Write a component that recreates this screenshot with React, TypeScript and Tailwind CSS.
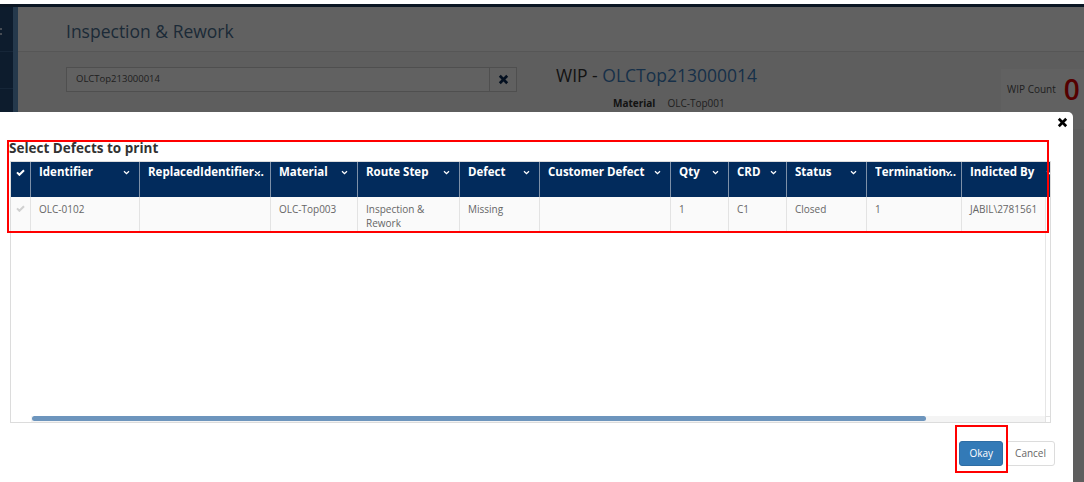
import React from 'react';

const columns = [
  { label: 'Identifier', width: 'w-[109px]' },
  { label: 'ReplacedIdentifierMaterial', width: 'w-[131px]' },
  { label: 'Material', width: 'w-[87px]' },
  { label: 'Route Step', width: 'w-[102px]' },
  { label: 'Defect', width: 'w-[80px]' },
  { label: 'Customer Defect', width: 'w-[131px]' },
  { label: 'Qty', width: 'w-[58px]' },
  { label: 'CRD', width: 'w-[58px]' },
  { label: 'Status', width: 'w-[80px]' },
  { label: 'TerminationReason', width: 'w-[95px]' },
  { label: 'Indicted By', width: 'w-[101px]' },
];

const row = ['OLC-0102', '', 'OLC-Top003', 'Inspection & Rework', 'Missing', '', '1', 'C1', 'Closed', '1', 'JABIL\\2781561'];

function Check({ className }: { className: string }) {
  return (
    <svg width="9" height="7" viewBox="0 0 9 7" className={className}>
      <path d="M1 3.4L3.4 5.8L8 1.2" fill="none" stroke="currentColor" strokeWidth="2" />
    </svg>
  );
}

function Chevron() {
  return (
    <svg width="7" height="5" viewBox="0 0 7 5" className="text-white">
      <path d="M1 1.2l2.5 2.5L6 1.2" fill="none" stroke="currentColor" strokeWidth="1.3" />
    </svg>
  );
}

function Times({ className }: { className: string }) {
  return (
    <svg width="11" height="11" viewBox="0 0 11 11" className={className}>
      <path d="M1.8 1.8l7.4 7.4M9.2 1.8l-7.4 7.4" stroke="currentColor" strokeWidth="2.7" />
    </svg>
  );
}

export default function App() {
  return (
    <div className="relative w-[1084px] h-[482px] overflow-hidden bg-white font-['Open_Sans',sans-serif]">
      {/* page behind the dialog */}
      <div className="h-[4px] bg-white" />
      <div className="h-[3px] bg-[#1d3a5c]" />
      <div className="flex h-[475px]">
        <aside className="w-[13px] bg-[#224a76] flex flex-col">
          <div className="h-[45px] border-b border-[#3a6594] flex flex-col gap-[3px] pt-[21px]">
            <span className="w-[2px] h-[2px] bg-[#b9c9dc]" />
            <span className="w-[2px] h-[2px] bg-[#b9c9dc]" />
          </div>
          <div className="h-[37px] border-b border-[#3a6594]" />
        </aside>
        <div className="w-[5px] bg-[#6396c8]" />
        <main className="flex-1 flex flex-col bg-[#f7f7f7]">
          <header className="h-[45px] bg-white border-b border-[#e3e3e3] flex items-center pl-[48px] pt-[4px]">
            <h1 className="text-[17.5px] text-[#4b6f91]">Inspection &amp; Rework</h1>
          </header>
          <div className="flex items-start pt-[16px] pl-[48px]">
            <div className="flex h-[25px] w-[451px] -mt-[1px]">
              <div className="flex-1 border border-[#cfcfcf] bg-white text-[9.5px] text-[#555] pl-[9px] flex items-center">
                OLCTop213000014
              </div>
              <button className="w-[27px] border border-l-0 border-[#cfcfcf] bg-[#fbfbfb] flex items-center justify-center text-[#0b2b55]">
                <Times className="" />
              </button>
            </div>
            <div className="ml-[39px] -mt-[5px]">
              <div className="text-[17.5px] leading-[24px] text-[#333]">
                WIP - <span className="text-[#3d7fbf]">OLCTop213000014</span>
              </div>
              <div className="flex text-[10px] leading-[14px] text-[#555] mt-[9px] pl-[57px]">
                <span className="font-bold text-[#333]">Material</span>
                <span className="ml-[12px]">OLC-Top001</span>
              </div>
            </div>
            <div className="ml-auto mt-[1px] w-[83px] h-[60px] bg-white flex items-start pt-[4px] pl-[6px]">
              <div className="flex items-center gap-[8px]">
                <span className="text-[10px] text-[#555]">WIP Count</span>
                <span className="text-[28px] leading-[32px] font-semibold text-[#e00000]">0</span>
              </div>
            </div>
          </div>
        </main>
      </div>

      {/* backdrop */}
      <div className="absolute inset-x-0 top-[4px] bottom-0 bg-black/[0.62]" />

      {/* dialog */}
      <div className="absolute left-[-6px] top-[112px] w-[1079px] bottom-[-10px] bg-white rounded-[5px] flex flex-col pt-[27px] pl-[16px] pr-[18px]">
        <button className="absolute top-[5px] right-[5px] text-black">
          <Times className="" />
        </button>
        <h2 className="-ml-[1px] text-[13.5px] leading-[18px] font-bold text-[#333]">Select Defects to print</h2>

        <div className="mt-[4px] w-[1041px] h-[262px] border border-[#dcdcdc] flex flex-col overflow-hidden">
          <div className="flex h-[35px] bg-[#022b5c] shrink-0">
            <div className="w-[20px] shrink-0 border-r border-[#7d90a8] flex justify-center pt-[7px] text-white">
              <Check className="" />
            </div>
            {columns.map((c) => (
              <div key={c.label} className={`${c.width} shrink-0 relative border-r border-[#7d90a8] pl-[8px] pr-[2px] pt-[2px]`}>
                <div className="truncate text-[11.5px] leading-[15px] font-bold text-white">{c.label}</div>
                <div className="absolute right-[9px] top-[8px]">
                  <Chevron />
                </div>
              </div>
            ))}
          </div>

          <div className="flex flex-1 min-h-0">
            <div className="flex-1 overflow-hidden">
              <div className="flex h-[35px] bg-[#fafafa] border-b border-[#e6e6e6]">
                <div className="w-[20px] shrink-0 border-r border-[#e3e3e3] flex justify-center pt-[8px] text-[#d0d0d0]">
                  <Check className="" />
                </div>
                {columns.map((c, i) => (
                  <div key={c.label} className={`${c.width} shrink-0 border-r border-[#e3e3e3] pl-[8px] pr-[4px] pt-[5px] text-[10px] leading-[14px] text-[#666]`}>
                    {row[i]}
                  </div>
                ))}
              </div>
            </div>
            <div className="w-[5px] border-l border-[#e6e6e6]" />
          </div>

          <div className="flex h-[6px] shrink-0">
            <div className="w-[20px]" />
            <div className="flex-1 bg-[#f4f4f4] flex pl-[1px]">
              <div className="w-[894px] h-[5px] rounded-full bg-[#6d95bd]" />
            </div>
            <div className="w-[5px] border-l border-t border-[#e3e3e3]" />
          </div>
        </div>

        <div className="flex justify-end gap-[3px] mt-[18px]">
          <button className="h-[25px] px-[9px] rounded-[3px] border border-[#2e6da4] bg-[#337ab7] text-[10px] text-white">Okay</button>
          <button className="h-[25px] px-[8px] rounded-[3px] border border-[#dcdcdc] bg-white text-[10px] text-[#666]">Cancel</button>
        </div>
      </div>

      {/* annotation boxes */}
      <div className="absolute left-[7px] top-[140px] w-[1042px] h-[93px] border-2 border-[#f00]" />
      <div className="absolute left-[955px] top-[425px] w-[53px] h-[48px] border-2 border-[#f00]" />
    </div>
  );
}
